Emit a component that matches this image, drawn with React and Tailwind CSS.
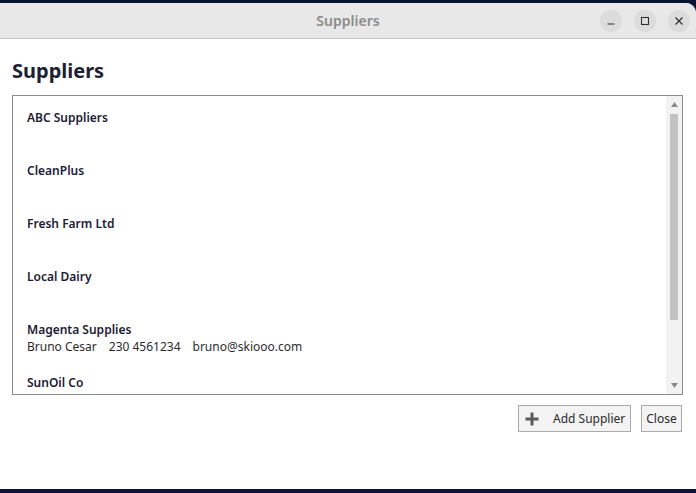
const suppliers = [
  { name: "ABC Suppliers" },
  { name: "CleanPlus" },
  { name: "Fresh Farm Ltd" },
  { name: "Local Dairy" },
  { name: "Magenta Supplies", contact: "Bruno Cesar", phone: "230 4561234", email: "bruno@skiooo.com" },
  { name: "SunOil Co" },
];

function WinButton({ children }) {
  return (
    <div className="flex h-[22px] w-[22px] items-center justify-center rounded-full bg-[#dcdcdc] text-[#2e2e2e]">
      {children}
    </div>
  );
}

export default function App() {
  return (
    <div className="flex h-[493px] w-[696px] flex-col overflow-hidden bg-[#0b1430] font-['Noto_Sans',sans-serif]">
      <div className="mt-[3px] flex min-h-0 flex-1 flex-col overflow-hidden rounded-tr-[10px] bg-white">
        <div className="relative flex h-[36px] shrink-0 items-center justify-center border-b border-[#c4c4c4] bg-[#e8e8e8]">
          <span className="text-[14px] font-semibold text-[#8c8c8c]">Suppliers</span>
          <div className="absolute right-[6px] top-[7px] flex gap-[12px]">
            <WinButton>
              <svg width="10" height="10" viewBox="0 0 10 10"><path d="M1.5 8h7" stroke="currentColor" strokeWidth="1.2" /></svg>
            </WinButton>
            <WinButton>
              <svg width="10" height="10" viewBox="0 0 10 10"><rect x="1.5" y="1.5" width="7" height="7" fill="none" stroke="currentColor" strokeWidth="1.1" /></svg>
            </WinButton>
            <WinButton>
              <svg width="10" height="10" viewBox="0 0 10 10"><path d="M1.5 1.5l7 7M8.5 1.5l-7 7" stroke="currentColor" strokeWidth="1.2" /></svg>
            </WinButton>
          </div>
        </div>

        <div className="flex flex-1 flex-col pl-[12px] pr-[13px]">
          <h1 className="mt-[18px] text-[20px] font-bold leading-[28px] text-[#1c2035]">Suppliers</h1>

          <div className="mt-[10px] flex h-[300px] border border-[#8c8c8c]">
            <div className="flex-1 overflow-hidden pl-[14px]">
              {suppliers.map((s) => (
                <div key={s.name} className="h-[53px] pt-[13px] text-[12px] leading-[17px] text-[#1c2035]">
                  <div className="font-semibold">{s.name}</div>
                  {s.contact && (
                    <div className="flex gap-[12px] text-[#2c2c2c]">
                      <span>{s.contact}</span>
                      <span>{s.phone}</span>
                      <span>{s.email}</span>
                    </div>
                  )}
                </div>
              ))}
            </div>
            <div className="flex w-[16px] flex-col items-center bg-[#f2f2f2] py-[5px]">
              <svg width="7" height="5" viewBox="0 0 7 5" className="mt-[1px]"><path d="M0 5L3.5 0L7 5Z" fill="#8a8a8a" /></svg>
              <div className="mt-[7px] h-[206px] w-[8px] bg-[#c3c3c3]" />
              <div className="flex-1" />
              <svg width="7" height="5" viewBox="0 0 7 5" className="mb-[1px]"><path d="M0 0L7 0L3.5 5Z" fill="#8a8a8a" /></svg>
            </div>
          </div>

          <div className="mr-[1px] mt-[10px] flex justify-end gap-[10px]">
            <button className="flex h-[27px] w-[113px] items-center gap-[14px] border border-[#ababab] bg-[#f3f3f3] pl-[6px] text-[12px] text-[#2a2a2a]">
              <svg width="14" height="14" viewBox="0 0 14 14"><path d="M5.5 0.5h3v5h5v3h-5v5h-3v-5h-5v-3h5z" fill="#5a5a5a" /></svg>
              <span>Add Supplier</span>
            </button>
            <button className="flex h-[27px] w-[41px] items-center justify-center border border-[#ababab] bg-[#f3f3f3] text-[12px] text-[#2a2a2a]">
              Close
            </button>
          </div>
        </div>
        <div className="h-[1px]" />
      </div>
      <div className="h-[4px] shrink-0" />
    </div>
  );
}
